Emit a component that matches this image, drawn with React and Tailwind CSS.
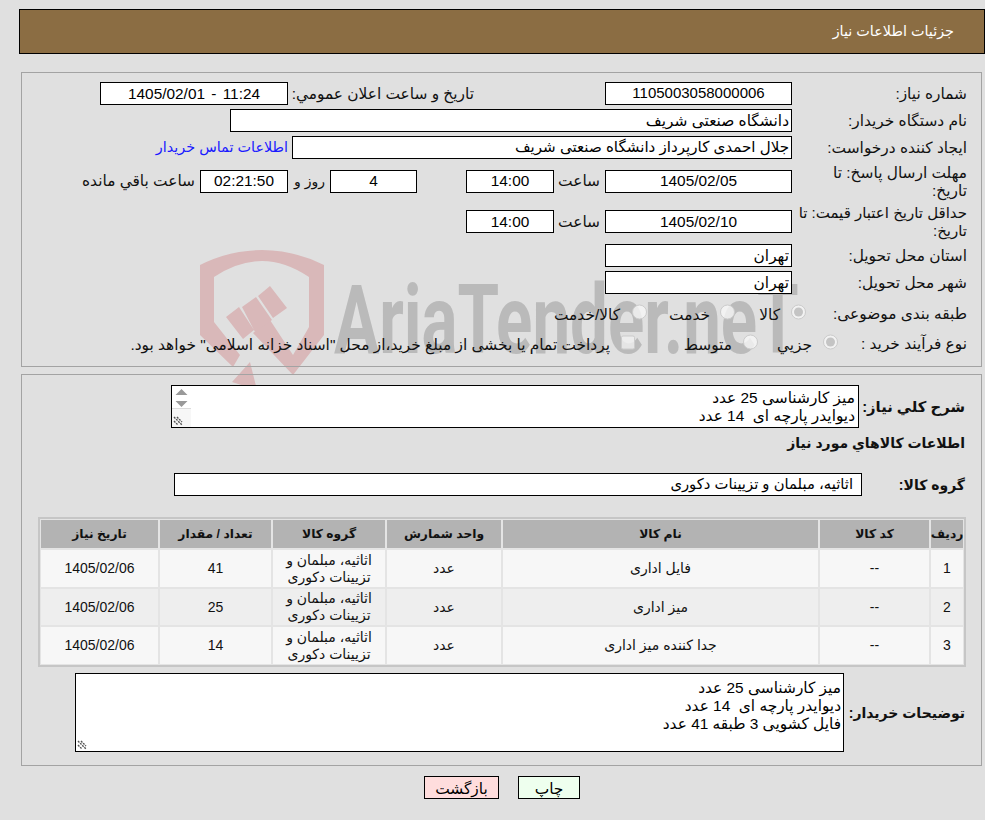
const BASE = "font-['Liberation_Sans','DejaVu_Sans',sans-serif]"

const ITEMS = [
  { id: 1, name: 'فایل اداری', qty: '41' },
  { id: 2, name: 'میز اداری', qty: '25' },
  { id: 3, name: 'جدا کننده میز اداری', qty: '14' }
]

const HEADERS = ['ردیف', 'کد کالا', 'نام کالا', 'واحد شمارش', 'گروه کالا', 'تعداد / مقدار', 'تاریخ نیاز']

function Box({ className = '', children }) {
  return (
    <div className={`shrink-0 flex items-center h-[23px] bg-white border border-black text-black whitespace-nowrap overflow-hidden ${className}`}>
      {children}
    </div>
  )
}

function Label({ className = '', children }) {
  return <div className={`shrink-0 leading-[18px] text-[#111] ${className}`}>{children}</div>
}

function Radio({ checked }) {
  return (
    <span className="shrink-0 -translate-y-[1.5px] w-[15px] h-[15px] rounded-full border border-[#cbcbcb] bg-[#f6f6f6]/80 flex items-center justify-center">
      {checked && <span className="w-[9px] h-[9px] rounded-full bg-[#c4c4c4]" />}
    </span>
  )
}

function Grip() {
  return (
    <svg width="10" height="10" viewBox="0 0 10 10" className="absolute left-[1px] bottom-[1px]">
      <path d="M1 1l8 8M1 5l4 4M4 1l5 5" stroke="#555" strokeWidth="1.4" strokeDasharray="2 1" fill="none" />
    </svg>
  )
}

function Watermark() {
  return (
    <>
      <svg width="150" height="145" viewBox="0 0 150 145" className="absolute left-[190px] top-[245px]">
        <path
          d="M10 20Q40 5 72 5Q104 5 134 20L134 90L103 130L63 88L80 75L103 110L119 82L119 32Q95 16 72 16Q48 16 24 32L24 77L50 110L43 122L10 90Z"
          fill="#d9b8b9"
        />
        <path d="M68 51L80 41L97 63L83 73ZM52 62L66 52L82 75L65 87ZM36 72L49 62L64 85L53 94ZM60 117L67 145L42 137Z" fill="#d9b8b9" />
      </svg>
      <div className="absolute left-[334px] top-[265px] origin-left scale-x-[.7] font-['Roboto',sans-serif] font-bold text-[96px] leading-[110px] text-[#bababa] whitespace-nowrap" dir="ltr">
        AriaTender.neT
      </div>
    </>
  )
}

export default function App() {
  return (
    <div dir="rtl" className={`relative w-[985px] h-[820px] overflow-hidden bg-[#e0e0e0] text-[15.4px] ${BASE}`}>
      <Watermark />

      <div className="relative">
        <div className="h-[9px]" />
        <div className="ml-[19px] h-[45px] flex items-center pr-[30px] bg-[#8b6d43] border border-black text-white text-[14.4px]">
          جزئیات اطلاعات نیاز
        </div>

        {/* top panel */}
        <div className="mt-[18px] mr-[3px] w-[961px] h-[295px] border border-[#a3a3a3] pr-[14px] pt-[9px]">
          <div className="flex items-center h-[23px]">
            <Label className="w-[175px]">شماره نیاز:</Label>
            <Box className="w-[187px] justify-center text-[15px]">1105003058000006</Box>
            <Label className="w-[186px] mr-[131px]">تاریخ و ساعت اعلان عمومي:</Label>
            <Box className="w-[188px] justify-center">
              <span dir="ltr" className="[word-spacing:2px]">1405/02/01 - 11:24</span>
            </Box>
          </div>

          <div className="flex items-center h-[23px] mt-[4px]">
            <Label className="w-[175px]">نام دستگاه خریدار:</Label>
            <Box className="w-[562px] pr-[2px]">دانشگاه صنعتی شریف</Box>
          </div>

          <div className="flex items-center h-[23px] mt-[4px]">
            <Label className="w-[175px]">ایجاد کننده درخواست:</Label>
            <Box className="w-[500px] pr-[2px] text-[15.1px]">جلال احمدی کارپرداز دانشگاه صنعتی شریف</Box>
            <a className="mr-[4px] text-[14.4px] text-[#1a1aff] whitespace-nowrap">اطلاعات تماس خریدار</a>
          </div>

          <div className="flex items-center h-[22px] mt-[11px]">
            <Label className="w-[175px] pl-[10px] pt-[2px]">مهلت ارسال پاسخ: تا تاریخ:</Label>
            <Box className="w-[187px] h-[22px] justify-center">1405/02/05</Box>
            <Label className="w-[51px] pr-[5px]">ساعت</Label>
            <Box className="w-[88px] h-[22px] justify-center">14:00</Box>
            <Box className="w-[87px] h-[22px] justify-center mr-[49px]">4</Box>
            <Label className="w-[42px] pr-[5px] text-[14px]">روز و</Label>
            <Box className="w-[88px] h-[22px] justify-center bg-[#ffffee]">02:21:50</Box>
            <Label className="mr-[5px] whitespace-nowrap">ساعت باقي مانده</Label>
          </div>

          <div className="flex items-center h-[23px] mt-[18px]">
            <Label className="w-[175px] pt-[1px] text-[15px]">حداقل تاریخ اعتبار قیمت: تا تاریخ:</Label>
            <Box className="w-[187px] justify-center">1405/02/10</Box>
            <Label className="w-[51px] pr-[5px]">ساعت</Label>
            <Box className="w-[88px] justify-center">14:00</Box>
          </div>

          <div className="flex items-center h-[23px] mt-[11px]">
            <Label className="w-[175px]">استان محل تحویل:</Label>
            <Box className="w-[187px] pr-[2px]">تهران</Box>
          </div>

          <div className="flex items-center h-[23px] mt-[4px]">
            <Label className="w-[175px]">شهر محل تحویل:</Label>
            <Box className="w-[187px] pr-[2px]">تهران</Box>
          </div>

          <div className="flex items-center h-[23px] mt-[8px]">
            <Label className="w-[161px]">طبقه بندی موضوعی:</Label>
            <div className="w-[71px] flex items-center gap-[11px]"><Radio checked /><Label className="pt-[3px]">کالا</Label></div>
            <div className="w-[88px] flex items-center gap-[10px]"><Radio /><Label className="pt-[3px]">خدمت</Label></div>
            <div className="flex items-center gap-[12px]"><Radio /><Label className="pt-[3px]">کالا/خدمت</Label></div>
          </div>

          <div className="flex items-center h-[23px] mt-[7px]">
            <Label className="w-[129px]">نوع فرآیند خرید :</Label>
            <div className="w-[80px] flex items-center gap-[11px]"><Radio checked /><Label className="pt-[3px]">جزيي</Label></div>
            <div className="w-[123px] flex items-center gap-[11px]"><Radio /><Label className="pt-[3px]">متوسط</Label></div>
            <div className="flex items-center gap-[11px]">
              <span className="shrink-0 -translate-y-[1.5px] w-[14px] h-[14px] rounded-[2px] border border-[#cbcbcb] bg-[#f0f0f0]/80" />
              <Label className="whitespace-nowrap pt-[3px]">پرداخت تمام یا بخشی از مبلغ خرید،از محل "اسناد خزانه اسلامی" خواهد بود.</Label>
            </div>
          </div>
        </div>

        {/* bottom panel */}
        <div className="mt-[7px] mr-[3px] w-[961px] h-[392px] border border-[#a3a3a3] pr-[16px] pt-[10px]">
          <div className="flex items-center">
            <Label className="w-[106px] font-bold text-[14.8px]">شرح کلي نیاز:</Label>
            <div className="relative w-[688px] h-[43px] bg-white border border-black pr-[3px] leading-[18px] pt-[3px] overflow-hidden whitespace-pre">
              {'میز کارشناسی 25 عدد\nدیوایدر پارچه ای  14 عدد'}
              <div className="absolute left-0 top-0 bottom-0 w-[19px]">
                <svg width="19" height="23" viewBox="0 0 19 23" className="absolute top-0 left-0">
                  <path d="M3.5 9L9.5 3L15.5 9ZM3.5 15L15.5 15L9.5 21Z" fill="#999" />
                </svg>
                <div className="absolute left-0 right-0 top-[22px] bottom-0 bg-[#f7f7f7] border-t border-[#dcdcdc]" />
                <Grip />
              </div>
            </div>
          </div>

          <Label className="mt-[6px] font-bold text-[14px]">اطلاعات کالاهاي مورد نیاز</Label>

          <div className="flex items-center mt-[21px]">
            <Label className="w-[103px] font-bold text-[14px]">گروه کالا:</Label>
            <Box className="w-[688px] pr-[8px] text-[14.8px]">اثاثیه، مبلمان و تزیینات دکوری</Box>
          </div>

          <div className="mt-[21px] -mr-px w-[928px] border-2 border-[#c6c6c6] p-[1px] bg-[#e4e4e4] grid grid-cols-[32px_109px_315px_114px_112px_111px_117px] grid-rows-[28px_37px_36px_37px] gap-[2px] text-[14px] text-[#111] text-center">
            {HEADERS.map((h) => (
              <div key={h} className="flex items-center justify-center bg-[#b3b3b3] font-bold text-[12.3px] whitespace-nowrap">{h}</div>
            ))}
            {ITEMS.map((item) => {
              const bg = item.id === 2 ? 'bg-[#eeeeee]' : 'bg-[#f7f7f7]'
              return [
                <div key={`${item.id}a`} className={`flex items-center justify-center ${bg}`}>{item.id}</div>,
                <div key={`${item.id}b`} className={`flex items-center justify-center ${bg}`}>--</div>,
                <div key={`${item.id}c`} className={`flex items-center justify-center ${bg}`}>{item.name}</div>,
                <div key={`${item.id}d`} className={`flex items-center justify-center ${bg}`}>عدد</div>,
                <div key={`${item.id}e`} className={`flex items-center justify-center leading-[17px] ${bg}`}>اثاثیه، مبلمان و<br />تزیینات دکوری</div>,
                <div key={`${item.id}f`} className={`flex items-center justify-center ${bg}`}>{item.qty}</div>,
                <div key={`${item.id}g`} className={`flex items-center justify-center ${bg}`}>1405/02/06</div>
              ]
            })}
          </div>

          <div className="flex items-center mt-[6px]">
            <Label className="w-[121px] font-bold text-[14px]">توضیحات خریدار:</Label>
            <div className="relative w-[769px] h-[79px] bg-white border border-black pr-[2px] pt-[5px] leading-[18px] whitespace-pre">
              {'میز کارشناسی 25 عدد\nدیوایدر پارچه ای  14 عدد\nفایل کشویی 3 طبقه 41 عدد'}
              <Grip />
            </div>
          </div>
        </div>

        <div className="mt-[10px] pr-[405px] flex gap-[19px]">
          <button className="w-[62px] h-[23px] bg-[#eeffee] border border-black text-black">چاپ</button>
          <button className="w-[75px] h-[23px] bg-[#ffdddd] border border-black text-black">بازگشت</button>
        </div>
      </div>
    </div>
  )
}
